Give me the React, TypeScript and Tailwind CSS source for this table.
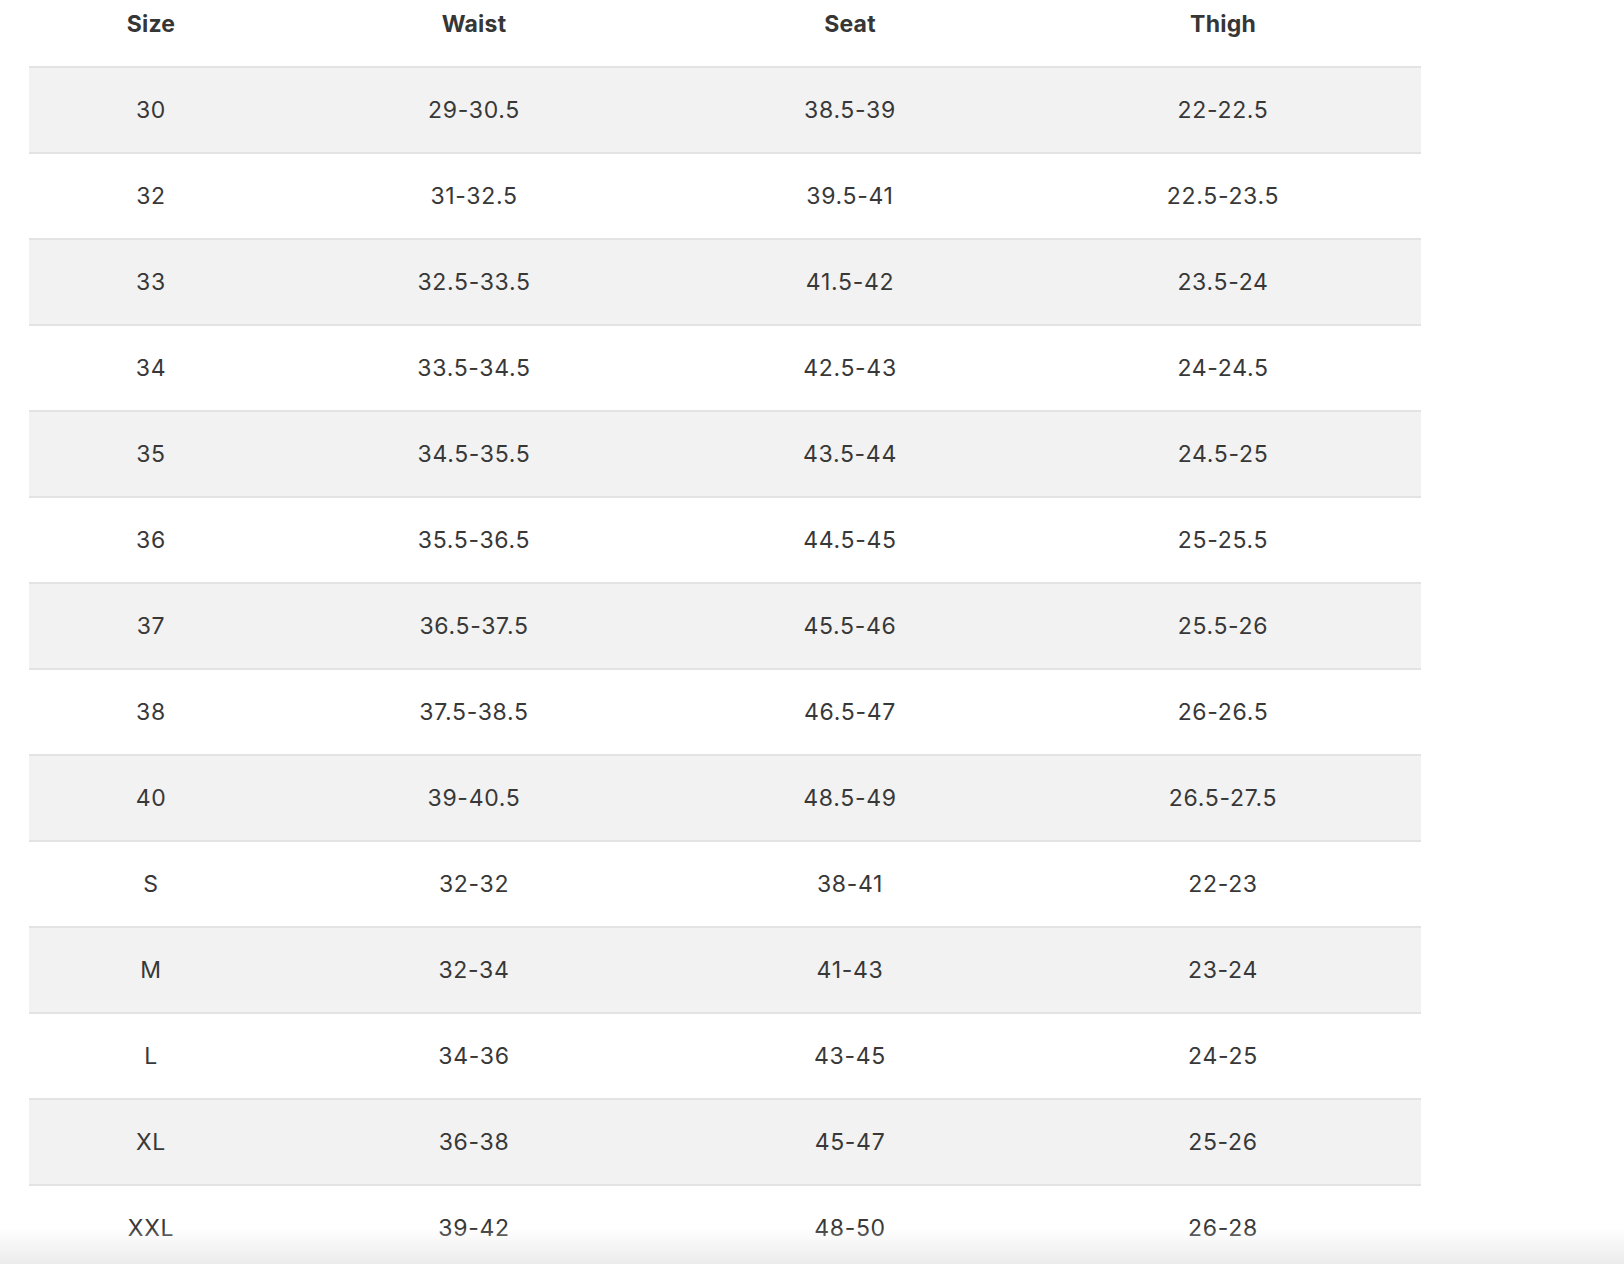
import React from "react";

const rows: string[][] = [
  ["30", "29-30.5", "38.5-39", "22-22.5"],
  ["32", "31-32.5", "39.5-41", "22.5-23.5"],
  ["33", "32.5-33.5", "41.5-42", "23.5-24"],
  ["34", "33.5-34.5", "42.5-43", "24-24.5"],
  ["35", "34.5-35.5", "43.5-44", "24.5-25"],
  ["36", "35.5-36.5", "44.5-45", "25-25.5"],
  ["37", "36.5-37.5", "45.5-46", "25.5-26"],
  ["38", "37.5-38.5", "46.5-47", "26-26.5"],
  ["40", "39-40.5", "48.5-49", "26.5-27.5"],
  ["S", "32-32", "38-41", "22-23"],
  ["M", "32-34", "41-43", "23-24"],
  ["L", "34-36", "43-45", "24-25"],
  ["XL", "36-38", "45-47", "25-26"],
  ["XXL", "39-42", "48-50", "26-28"],
];

const headers = ["Size", "Waist", "Seat", "Thigh"];

export default function App() {
  return (
    <div
      className="relative min-h-screen bg-white text-[#363636]"
      style={{ fontFamily: "Inter, 'Noto Sans', 'Liberation Sans', sans-serif" }}
    >
      <div className="ml-[29px] w-[1392px]">
        <div className="grid h-[66px] grid-cols-[244px_402px_350px_396px]">
          {headers.map((h) => (
            <div
              key={h}
              className="flex h-[48px] items-center justify-center text-[23px] font-bold leading-none tracking-[0.01em] text-[#363636]"
            >
              {h}
            </div>
          ))}
        </div>
        {rows.map((r, i) => (
          <div
            key={r[0]}
            className={
              "grid h-[86px] grid-cols-[244px_402px_350px_396px] border-t-2 border-[#e3e3e3] " +
              (i % 2 === 0 ? "bg-[#f2f2f2]" : "bg-white")
            }
          >
            {r.map((c, j) => (
              <div
                key={j}
                className="flex items-center justify-center text-[23px] leading-none tracking-[0.03em] text-[#383838]"
              >
                {c}
              </div>
            ))}
          </div>
        ))}
      </div>
      <div className="pointer-events-none fixed bottom-0 left-0 right-0 h-[36px] bg-linear-to-b from-white/0 to-[#ebebeb]" />
    </div>
  );
}
